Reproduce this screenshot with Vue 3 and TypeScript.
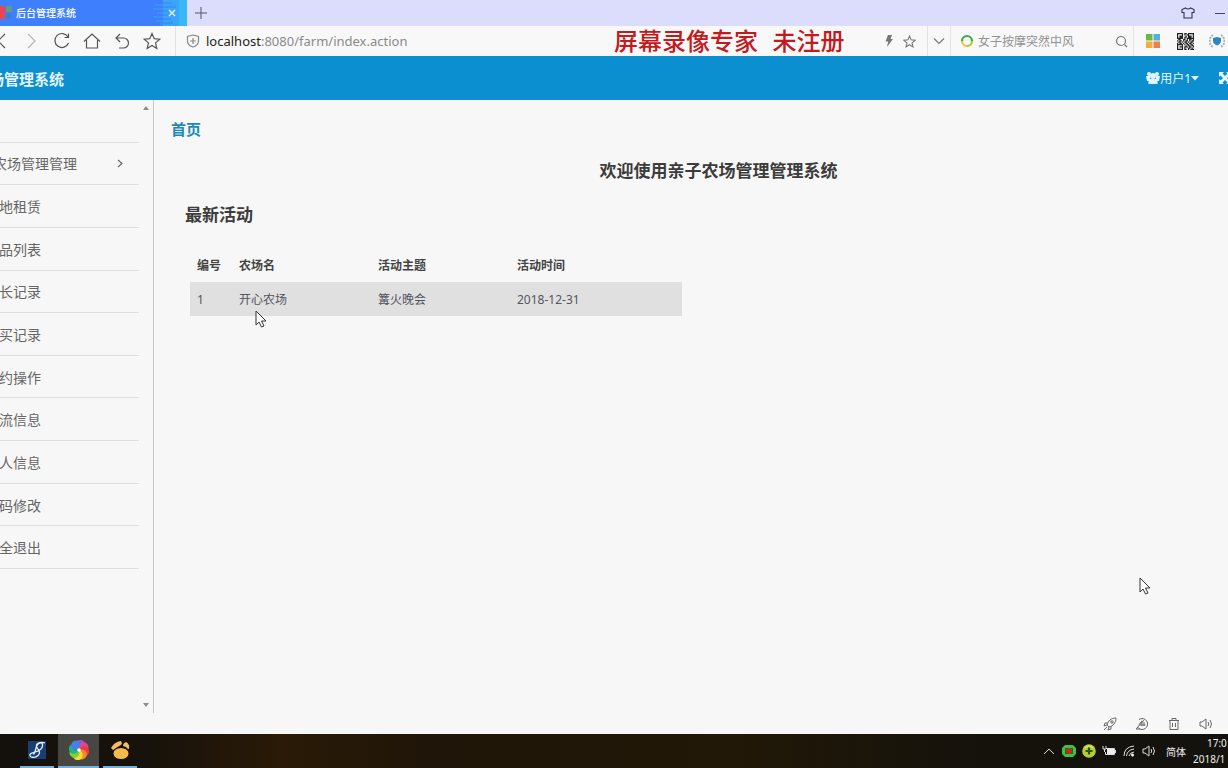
<script setup lang="ts">
interface Activity {
  id: number
  farm: string
  topic: string
  date: string
}

const menu: string[] = ['地租赁', '品列表', '长记录', '买记录', '约操作', '流信息', '人信息', '码修改', '全退出']
const activities: Activity[] = [{ id: 1, farm: '开心农场', topic: '篝火晚会', date: '2018-12-31' }]

const qrRows: string[] = [
  '11111011011111',
  '10001010110001',
  '10111001011101',
  '10111011011101',
  '11111010111111',
  '01100110101101',
  '10110101101011',
  '01101011010110',
  '10110101101101',
  '11111010110110',
  '10001001011011',
  '10111011101101',
  '10001010011010',
  '11111011010111',
]
const qrPath = qrRows
  .map((row, y) => [...row].map((c, x) => (c === '1' ? `M${x} ${y}h1v1h-1z` : '')).join(''))
  .join('')

const wheel: { color: string; angle: number }[] = [
  { color: '#8e55d8', angle: 0 },
  { color: '#e0449a', angle: 45 },
  { color: '#ee3b32', angle: 90 },
  { color: '#f58a26', angle: 135 },
  { color: '#f8dc35', angle: 180 },
  { color: '#7fd03c', angle: 225 },
  { color: '#22b573', angle: 270 },
  { color: '#3f83e8', angle: 315 },
]
</script>

<template>
  <div class="desktop">
    <header class="tabs">
      <div class="tab">
        <svg class="favicon" width="14" height="16" viewBox="0 0 14 16" aria-hidden="true">
          <path d="M0 1h5v13H0z" fill="#ee4450" /><path d="M6 1h6v6H6z" fill="#5b9d8c" /><path d="M6 8h5v6H6z" fill="#3f80c8" />
        </svg>
        <span class="tab-title">后台管理系统</span>
        <svg class="shimmer" width="34" height="26" viewBox="0 0 34 26" aria-hidden="true">
          <path d="M10 0h24v26H10z" fill="#3aa6f8" /><path d="M26 0h8v26h-8z" fill="#38b7fb" />
          <path d="M2 5h16M0 9h14M4 13h18M0 17h17M3 21h20M7 24h12" stroke="#3aa2f6" />
          <path d="M10 3h9M10 7h13M10 11h7M10 15h12M10 19h8M10 23h10" stroke="#3b80f3" />
        </svg>
        <button class="tab-close" aria-label="关闭标签页">
          <svg width="8" height="8" viewBox="0 0 8 8"><path d="M1 1l6 6M7 1L1 7" stroke="#d8f0ff" stroke-width="1.500" /></svg>
        </button>
      </div>
      <button class="new-tab" aria-label="新建标签页">
        <svg width="12" height="12" viewBox="0 0 12 12"><path d="M6 0v12M0 6h12" stroke="#55556a" /></svg>
      </button>
      <div class="window-tools">
        <button aria-label="皮肤">
          <svg width="14" height="12" viewBox="0 0 14 12"><path d="M4.500 1Q7 3 9.500 1L13 2.500V5.500H11V11H3V5.500H1V2.500z" fill="none" stroke="#33334d" stroke-width="1.100" /></svg>
        </button>
        <button aria-label="最小化">
          <svg width="12" height="12" viewBox="0 0 12 12"><path d="M1 6.500h10" stroke="#44445a" /></svg>
        </button>
      </div>
    </header>

    <nav class="toolbar" aria-label="浏览器">
      <div class="nav-buttons">
        <button aria-label="后退"><svg width="18" height="18" viewBox="0 0 18 18"><path d="M12 2L5 9l7 7" /></svg></button>
        <button aria-label="前进"><svg class="faint" width="18" height="18" viewBox="0 0 18 18"><path d="M5 2l7 7-7 7" /></svg></button>
        <button aria-label="刷新"><svg width="18" height="18" viewBox="0 0 18 18"><path d="M15 5A7 7 0 1 0 15.500 11M15.500 1.500V5.500H11.500" /></svg></button>
        <button aria-label="主页"><svg width="18" height="18" viewBox="0 0 18 18"><path d="M1 9.500L9 2l8 7.500M3.500 8v8H14.500V8" /></svg></button>
        <button aria-label="撤销"><svg width="18" height="18" viewBox="0 0 18 18"><path d="M7 2L3 6l4 4M3 6H10.500a5 5 0 0 1 0 10H6" /></svg></button>
        <button aria-label="收藏"><svg width="18" height="18" viewBox="0 0 18 18"><path d="M9 1.500l2.200 5.200 5.600.5-4.300 3.700 1.300 5.500L9 13.500l-4.800 2.900 1.300-5.500L1.200 7.200l5.600-.5z" /></svg></button>
      </div>
      <div class="address">
        <svg width="14" height="14" viewBox="0 0 14 14" aria-hidden="true"><path d="M7 1l5.500 1.500v4.500c0 3-2.500 5-5.500 6-3-1-5.500-3-5.500-6V2.500zM7 4v6M4 7h6" /></svg>
        <div class="url" role="textbox" aria-label="地址"><b>localhost</b>:8080/farm/index.action</div>
        <button aria-label="极速模式"><svg width="10" height="12" viewBox="0 0 10 12"><path d="M4 0h4L6.500 4H9L3 12l1.200-5.500H1.500z" fill="#777" stroke="none" /></svg></button>
        <button aria-label="加入收藏夹"><svg class="mid" width="13" height="13" viewBox="0 0 18 18"><path d="M9 1.500l2.200 5.200 5.600.5-4.300 3.700 1.300 5.500L9 13.500l-4.800 2.900 1.300-5.500L1.200 7.200l5.600-.5z" stroke-width="1.500" /></svg></button>
      </div>
      <button class="drop" aria-label="展开"><svg class="mid" width="12" height="8" viewBox="0 0 12 8"><path d="M1 1.500l5 5 5-5" /></svg></button>
      <div class="search">
        <svg width="14" height="14" viewBox="0 0 14 14" aria-hidden="true">
          <path d="M2 7a5 5 0 0 1 10 0" class="ring-green" /><path d="M2 7a5 5 0 0 0 5 5" class="ring-yellow" /><path d="M7 12a5 5 0 0 0 5-5" class="ring-lime" />
        </svg>
        <input type="text" aria-label="搜索" placeholder="女子按摩突然中风" />
        <button aria-label="搜索"><svg class="mid" width="13" height="13" viewBox="0 0 13 13"><circle cx="6" cy="6" r="4.500" /><path d="M9.500 9.500L12 12" /></svg></button>
      </div>
      <div class="extensions">
        <button aria-label="应用"><svg width="14" height="14" viewBox="0 0 14 14"><g stroke="none"><path d="M0 0h6.500v6.500H0z" fill="#6fb840" /><path d="M7.500 0H14v6.500H7.500z" fill="#54b0dc" /><path d="M0 7.500h6.500V14H0z" fill="#f4ad3c" /><path d="M7.500 7.500H14V14H7.500z" fill="#ee8050" /></g></svg></button>
        <button aria-label="二维码"><svg width="17" height="17" viewBox="0 0 14 14"><path :d="qrPath" fill="#222" stroke="none" /></svg></button>
        <button aria-label="安全"><svg width="16" height="16" viewBox="0 0 16 16"><path d="M4 2a7 7 0 0 0 0 12M12 2a7 7 0 0 1 0 12" class="laurel" /><path d="M8 4l4 1V8c0 2.500-2 3.500-4 4.500-2-1-4-2-4-4.500V5z" fill="#2f86c2" stroke="none" /></svg></button>
      </div>
      <div class="watermark">屏幕录像专家 未注册</div>
    </nav>

    <header class="app-header">
      <strong class="brand">场管理系统</strong>
      <div class="account">
        <button class="user">
          <svg width="14" height="14" viewBox="0 0 14 14" aria-hidden="true"><g fill="currentColor"><circle cx="3" cy="3" r="2" /><circle cx="11" cy="3" r="2" /><circle cx="7" cy="5" r="3" /><path d="M0 5h4v5H1zM10 5h4l-1 5h-3zM2.500 10Q3 7 7 8q4-1 4.500 2v3h-9z" /></g></svg>
          <span>用户1</span>
          <svg width="8" height="5" viewBox="0 0 8 5" aria-hidden="true"><path d="M0 0h8L4 4.500z" fill="currentColor" /></svg>
        </button>
        <button class="full" aria-label="全屏">
          <svg width="12" height="12" viewBox="0 0 12 12"><path d="M0 0h5L3.500 1.500 6 4l2.500-2.500L7 0h5v5l-1.500-1.500L8 6l2.500 2.500L12 7v5H7l1.500-1.500L6 8l-2.500 2.500L5 12H0V7l1.500 1.500L4 6 1.500 3.500 0 5z" fill="currentColor" /></svg>
        </button>
      </div>
    </header>

    <div class="workspace">
      <aside class="sidebar">
        <ul class="menu">
          <li></li>
          <li>
            <a href="#" class="parent"><span>农场管理管理</span>
              <svg width="6" height="9" viewBox="0 0 6 9" aria-hidden="true"><path d="M1 1l4 3.500L1 8" fill="none" stroke="#666" stroke-width="1.200" /></svg>
            </a>
          </li>
          <li v-for="item in menu" :key="item"><a href="#">{{ item }}</a></li>
        </ul>
        <div class="scroller">
          <button aria-label="向上滚动"><svg width="6" height="4" viewBox="0 0 6 4"><path d="M3 0l3 4H0z" fill="#8c8c8c" /></svg></button>
          <button aria-label="向下滚动"><svg width="6" height="4" viewBox="0 0 6 4"><path d="M3 4l3-4H0z" fill="#8c8c8c" /></svg></button>
        </div>
      </aside>

      <main class="content">
        <a href="#" class="crumb">首页</a>
        <h1>欢迎使用亲子农场管理管理系统</h1>
        <h2>最新活动</h2>
        <table>
          <thead>
            <tr><th class="narrow">编号</th><th class="medium">农场名</th><th class="medium">活动主题</th><th>活动时间</th></tr>
          </thead>
          <tbody>
            <tr v-for="a in activities" :key="a.id"><td>{{ a.id }}</td><td>{{ a.farm }}</td><td>{{ a.topic }}</td><td>{{ a.date }}</td></tr>
          </tbody>
        </table>
      </main>
    </div>

    <footer class="status">
      <button aria-label="加速"><svg width="14" height="14" viewBox="0 0 14 14"><path d="M4 8c1-4 4-7 9-7 0 5-3 8-7 9zM5 6H2L1 9l3-1M8 9v3l-3 1 1-3M1 13l3-3" /><circle cx="9" cy="5" r="1.200" /></svg></button>
      <button aria-label="清理"><svg width="14" height="14" viewBox="0 0 14 14"><path d="M4 2.500a5.500 5.500 0 1 1-1.500 7.500M1 12L9 3M4 7.500l3-3.500v5M4.500 8h6M9 5v4M1 12h4" /></svg></button>
      <button aria-label="回收站"><svg width="14" height="14" viewBox="0 0 14 14"><path d="M2 3.500h10M5 3.500v-2h4v2M3 3.500v9h8v-9M5.500 6v4M8.500 6v4" /></svg></button>
      <button aria-label="声音"><svg width="14" height="14" viewBox="0 0 14 14"><path d="M1 5v4h2l4 3V2L3 5zM9 5q1.500 2 0 4M11 3q3 4 0 8" /></svg></button>
    </footer>

    <footer class="taskbar">
      <div class="apps">
        <button class="app" aria-label="录像专家">
          <svg width="20" height="20" viewBox="0 0 20 20"><path d="M1 1h18v18H1z" fill="#183e72" /><path d="M18 3C13 1 8 4 10 7.500s4 5 1 8-9 2-8-1 10-2 12-7-2-6-4.500-3-1 6-4 10" fill="none" stroke="#e2eefb" stroke-width="1.300" /></svg>
        </button>
        <button class="app active" aria-label="浏览器">
          <svg width="20" height="20" viewBox="0 0 20 20"><g v-for="p in wheel" :key="p.angle" :transform="`rotate(${p.angle} 10 10)`"><path d="M10 10C5 8 5 1 10 0s7 4 5 6z" :fill="p.color" /></g><circle cx="10" cy="10" r="1.800" fill="#fff" /></svg>
        </button>
        <button class="app" aria-label="工具">
          <svg width="20" height="20" viewBox="0 0 20 20"><ellipse cx="11" cy="13.500" rx="7.500" ry="5.500" fill="#f6b94b" /><path d="M1 8Q4 2 11 1q2 3-1 4.500T3 10zM13 6q0-3 3-4 4 2 3 7-2 0-3-2z" fill="#f3be62" /></svg>
        </button>
      </div>
      <div class="tray">
        <button aria-label="显示隐藏的图标"><svg width="12" height="8" viewBox="0 0 12 8"><path d="M1 7l5-5 5 5" /></svg></button>
        <button aria-label="显卡"><svg width="14" height="12" viewBox="0 0 14 12"><path d="M3 0h8l3 3v6l-3 3H3L0 9V3z" fill="#37c444" stroke="none" /><path d="M3 3h8v6H3z" fill="#54502a" stroke="none" /><circle cx="7" cy="6" r="3" fill="#b8321e" stroke="none" /></svg></button>
        <button aria-label="安全卫士"><svg width="14" height="14" viewBox="0 0 14 14"><circle cx="7" cy="7" r="6.800" fill="#b6ce32" stroke="none" /><path d="M3 4q4-4 8 0" stroke="#f1ec85" /><path d="M7 3.500v7M3.500 7h7" stroke="#30521a" stroke-width="2.200" /></svg></button>
        <button aria-label="电池"><svg width="14" height="12" viewBox="0 0 14 12"><path d="M4 3.500h8.500v6H3.500V7M13.500 5v3M1 1v3h3V1M2.500 4v3" /><path d="M5 4h7v5H5z" fill="#eee" stroke="none" /></svg></button>
        <button aria-label="网络"><svg width="12" height="12" viewBox="0 0 12 12"><path d="M1 11Q1 2 11 1M3.500 11Q4 5 11 4M6 11Q6.500 7.500 11 7" /><circle cx="9.500" cy="10" r="1.200" fill="#eee" /></svg></button>
        <button aria-label="音量"><svg width="14" height="14" viewBox="0 0 14 14"><path d="M1 5v4h2l4 3V2L3 5zM9 5q1.500 2 0 4M11 3q3 4 0 8" /></svg></button>
        <button class="ime">简体</button>
        <div class="clock"><span class="time">17:0</span><span>2018/1</span></div>
      </div>
    </footer>

    <svg class="cursor first" width="12" height="19" viewBox="0 0 12 19" aria-hidden="true"><path d="M1 1v14l3-3 2.500 5 2.500-1-2.500-5H11z" /></svg>
    <svg class="cursor second" width="12" height="19" viewBox="0 0 12 19" aria-hidden="true"><path d="M1 1v14l3-3 2.500 5 2.500-1-2.500-5H11z" /></svg>
  </div>
</template>

<style>
body {
  margin: 0;
  background: #f7f7f7;
}
</style>

<style scoped>
.desktop {
  position: relative;
  display: flex;
  flex-direction: column;
  min-height: 100vh;
  overflow: hidden;
  font-family: "Noto Sans", "Noto Sans CJK SC", sans-serif;
  font-size: 12px;
  color: #444;
  background: #f7f7f7;
}
button {
  display: flex;
  align-items: center;
  justify-content: center;
  flex: none;
  padding: 0;
  border: 0;
  background: none;
  color: inherit;
  font: inherit;
}
svg {
  display: block;
  flex: none;
}
a {
  color: inherit;
  text-decoration: none;
}
.tabs {
  display: flex;
  height: 26px;
  background: #dcdcfc;
}
.tab {
  position: relative;
  display: flex;
  align-items: center;
  width: 187px;
  background: #3e7ffd;
  color: #fff;
}
.tab-title {
  flex: 1;
  margin-left: 2px;
  font-size: 10px;
  font-weight: 500;
  line-height: 26px;
}
.shimmer {
  position: absolute;
  right: 0;
  top: 0;
}
.tab-close {
  position: relative;
  width: 30px;
  height: 26px;
}
.new-tab {
  width: 28px;
}
.window-tools {
  display: flex;
  margin-left: auto;
  margin-right: -8px;
}
.window-tools button {
  width: 32px;
}
.toolbar {
  position: relative;
  display: flex;
  height: 30px;
  background: #f8f8f8;
}
.toolbar svg {
  fill: none;
  stroke: #555;
  stroke-width: 1.200;
}
.toolbar svg.faint {
  stroke: #b5b5b5;
}
.toolbar svg.mid {
  stroke: #777;
}
.nav-buttons {
  display: flex;
  margin-left: -13px;
}
.nav-buttons button {
  width: 30px;
}
.address {
  display: flex;
  flex: 1;
  align-items: center;
  margin-left: 8px;
  padding: 0 8px 0 10px;
  border-left: 1px solid #e4e4e4;
}
.address > svg {
  stroke: #888;
}
.address button {
  width: 20px;
}
.url {
  flex: 1;
  margin-left: 6px;
  font-size: 13px;
  color: #8a8a8a;
}
.url b {
  font-weight: 400;
  color: #222;
}
.drop {
  width: 23px;
  border-left: 1px solid #e4e4e4;
}
.search {
  box-sizing: border-box;
  display: flex;
  align-items: center;
  width: 184px;
  padding-left: 9px;
  border-left: 1px solid #e4e4e4;
  border-right: 1px solid #e4e4e4;
}
.search .ring-green {
  stroke: #36ac4e;
  stroke-width: 2.200;
}
.search .ring-yellow {
  stroke: #f4c430;
  stroke-width: 2.200;
}
.search .ring-lime {
  stroke: #a8c93a;
  stroke-width: 2.200;
}
.search input {
  flex: 1;
  min-width: 0;
  padding: 0 0 0 4px;
  border: 0;
  outline: 0;
  background: none;
  font: inherit;
}
.search input::placeholder {
  color: #929292;
}
.search button {
  width: 24px;
}
.extensions {
  display: flex;
  margin-left: 3px;
  margin-right: -5px;
}
.extensions button {
  width: 32px;
}
.extensions .laurel {
  stroke: #9fb5c5;
  stroke-width: 2;
  stroke-dasharray: 2 1;
}
.watermark {
  position: absolute;
  left: 50%;
  top: 3px;
  line-height: 30px;
  font-family: "Liberation Mono", "Noto Sans CJK SC", monospace;
  font-size: 24px;
  font-weight: 500;
  color: #c4191d;
  white-space: nowrap;
}
.app-header {
  display: flex;
  align-items: center;
  justify-content: space-between;
  height: 44px;
  background: #0c8fd1;
  color: #e4f5ff;
}
.brand {
  margin-left: -11px;
  font-size: 15px;
}
.account {
  display: flex;
  gap: 20px;
  margin-right: -3px;
}
.user {
  font-size: 12px;
}
.workspace {
  display: flex;
  flex: 1;
}
.sidebar {
  display: flex;
  width: 153px;
  border-right: 1px solid #c8c8c8;
}
.menu {
  display: grid;
  grid-auto-rows: 1fr;
  flex: 1;
  min-height: 469px;
  align-self: flex-start;
  margin: 0;
  padding: 0;
  list-style: none;
  font-size: 14px;
  color: #666;
}
.menu li {
  display: grid;
  border-bottom: 1px solid #dedede;
}
.menu a {
  display: flex;
  align-items: center;
  margin-left: -1px;
}
.menu .parent {
  justify-content: space-between;
  margin-left: -7px;
  padding-right: 16px;
}
.scroller {
  display: flex;
  flex-direction: column;
  justify-content: space-between;
  width: 14px;
}
.scroller button {
  height: 16px;
}
.content {
  flex: 1;
  padding: 16px 10px 16px 17px;
}
.crumb {
  display: block;
  font-size: 15px;
  font-weight: 700;
  line-height: 26px;
  color: #2089b8;
}
h1,
h2 {
  margin: 0;
  font-size: 17px;
  line-height: 26px;
  color: #3c3c3c;
}
h1 {
  margin-top: 16px;
  padding-left: 48px;
  text-align: center;
}
h2 {
  margin: 18px 0 20px 14px;
}
table {
  width: 47%;
  margin-left: 19px;
  table-layout: fixed;
  border-collapse: collapse;
  text-align: left;
}
th,
td {
  height: 34px;
  padding: 0 7px;
}
tbody {
  background: #e0e0e0;
  color: #55555f;
}
.narrow {
  width: 28px;
}
.medium {
  width: 125px;
}
.status {
  display: flex;
  justify-content: flex-end;
  height: 21px;
  padding-right: 6px;
}
.status button {
  width: 32px;
}
.status svg {
  fill: none;
  stroke: #666;
}
.taskbar {
  display: flex;
  justify-content: space-between;
  height: 34px;
  background: linear-gradient(90deg, #14110c 0%, #17120b 12%, #2a1a06 23%, #1f1508 35%, #211807 60%, #15120c 80%, #14120c 100%);
  color: #eee;
}
.apps {
  display: flex;
  gap: 4px;
  padding-left: 20px;
}
.app {
  width: 34px;
  border-bottom: 2px solid #76aee0;
}
.app.active {
  width: 41px;
  background: #484643;
}
.tray {
  display: flex;
  align-items: center;
}
.tray button {
  width: 20px;
}
.tray svg {
  fill: none;
  stroke: #ddd;
}
.tray .ime {
  width: 34px;
  font-size: 10px;
}
.clock {
  display: flex;
  flex-direction: column;
  width: 35px;
  font-size: 10px;
  line-height: 16px;
  white-space: nowrap;
}
.time {
  padding-left: 14px;
}
.cursor {
  position: absolute;
  fill: #fff;
  stroke: #333;
}
.cursor.first {
  left: 255px;
  top: 310px;
}
.cursor.second {
  left: 1139px;
  top: 577px;
}
</style>
